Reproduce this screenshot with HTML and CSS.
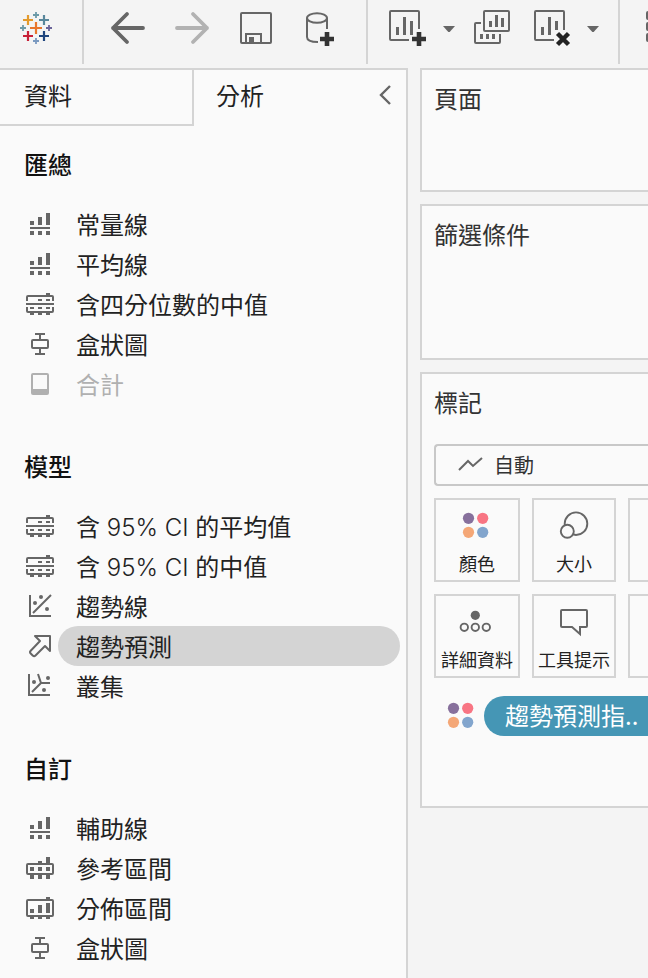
FILE: index.html
```html
<!DOCTYPE html>
<html lang="zh-Hant">
<head>
  <meta charset="UTF-8">
  <meta name="viewport" content="width=device-width, initial-scale=1">
  <title>分析</title>
  <link rel="stylesheet" href="styles.css">
</head>
<body>

<!-- shared icons -->
<svg class="sprite" aria-hidden="true">
  <symbol id="i-line" viewBox="0 0 32 32">
    <path fill="currentColor" d="M6 13h4v4H6zM14 9h4v8h-4zM22 5h4v12h-4zM6 19h20v2H6zM6 23h4v4H6zM14 23h4v4h-4zM22 23h4v4h-4z"/>
  </symbol>
  <symbol id="i-median" viewBox="0 0 32 32">
    <path fill="none" stroke="currentColor" stroke-width="2" d="M3 13V9a1 1 0 0 1 1-1H28a1 1 0 0 1 1 1V13M2 16H30M3 19V23a1 1 0 0 0 1 1H28a1 1 0 0 0 1-1V19"/>
    <path fill="currentColor" d="M22 5h4v2h-4zM14 11h4v2h-4zM22 11h4v2h-4zM6 19h4v2H6zM14 19h4v2h-4zM22 19h4v2h-4zM6 25h4v2H6zM14 25h4v2h-4zM22 25h4v2h-4z"/>
  </symbol>
  <symbol id="i-box" viewBox="0 0 32 32">
    <path fill="none" stroke="currentColor" stroke-width="2" d="M11 6H21M16 6V12M16 20V26M11 26H21"/>
    <rect x="8" y="12" width="16" height="8" rx="1" fill="none" stroke="currentColor" stroke-width="2"/>
  </symbol>
  <symbol id="i-dots" viewBox="0 0 32 32">
    <circle cx="7.5" cy="8.3" r="5.6" fill="#87709c"/>
    <circle cx="21.7" cy="8.3" r="5.6" fill="#f87583"/>
    <circle cx="7.5" cy="22.3" r="5.6" fill="#f4a777"/>
    <circle cx="21.7" cy="22.3" r="5.6" fill="#82a5cd"/>
  </symbol>
</svg>

<header class="toolbar">
  <div class="logo">
    <svg width="40" height="40" viewBox="0 0 40 40" fill="none">
      <path stroke="#e8762c" stroke-width="2.2" d="M20 14V26M14 20H26"/>
      <path stroke="#e39a2d" stroke-width="2.2" d="M12 7V17M7 12H17"/>
      <path stroke="#59879b" stroke-width="2.2" d="M28 7V17M23 12H33"/>
      <path stroke="#c72037" stroke-width="2.2" d="M12 23V33M7 28H17"/>
      <path stroke="#1f457e" stroke-width="2.2" d="M28 23V33M23 28H33"/>
      <path stroke="#6c9aa8" stroke-width="1.8" d="M20 4V10M17 7H23M7 17V23M4 20H10"/>
      <path stroke="#7a99c0" stroke-width="1.8" d="M20 30V36M17 33H23"/>
      <path stroke="#6a6499" stroke-width="1.8" d="M33 17V23M30 20H36"/>
    </svg>
  </div>
  <div class="tools nav">
    <button class="tool" aria-label="上一步">
      <svg width="40" height="40" viewBox="0 0 40 40" fill="none" stroke="#666" stroke-width="3.8" stroke-linecap="round" stroke-linejoin="round"><path d="M35 20H5M19 6L5 20L19 34"/></svg>
    </button>
    <button class="tool" aria-label="下一步">
      <svg width="40" height="40" viewBox="0 0 40 40" fill="none" stroke="#b2b2b2" stroke-width="3.8" stroke-linecap="round" stroke-linejoin="round"><path d="M5 20H35M21 6L35 20L21 34"/></svg>
    </button>
    <button class="tool" aria-label="儲存">
      <svg width="40" height="40" viewBox="0 0 40 40" fill="none" stroke="#666" stroke-width="2"><rect x="5" y="5" width="30" height="30" rx="1"/><path d="M10 35V26H25V35"/><path d="M13 29h5v5h-5z" fill="#666" stroke="none"/></svg>
    </button>
    <button class="tool" aria-label="新增資料來源">
      <svg width="40" height="40" viewBox="0 0 40 40" fill="none" stroke="#666" stroke-width="2"><ellipse cx="17" cy="10" rx="10" ry="4.8"/><path d="M7 10V29C7 32 11 34 18 34M27 10V21"/><path d="M27 24V38M20 31H34" stroke="#333" stroke-width="4.6"/></svg>
    </button>
  </div>
  <div class="tools sheets">
    <button class="tool" aria-label="新增工作表">
      <svg width="40" height="40" viewBox="0 0 40 40"><path fill="none" stroke="#666" stroke-width="2" d="M21 32H3a1 1 0 0 1-1-1V4a1 1 0 0 1 1-1H30a1 1 0 0 1 1 1V21"/><path fill="#666" d="M8 19h3v8H8zM15 9h3v18h-3zM22 13h3v14h-3z"/><path stroke="#333" stroke-width="4.6" d="M31 24V38M24 31H38"/></svg>
    </button>
    <button class="caret" aria-label="新增選項">
      <svg width="12" height="10" viewBox="0 0 12 10"><path fill="#666" d="M0 3H12L6.700 9H5.300Z"/></svg>
    </button>
    <button class="tool duplicate" aria-label="複製">
      <svg width="40" height="40" viewBox="0 0 40 40"><g fill="none" stroke="#666" stroke-width="2"><rect x="12" y="3" width="25" height="20" rx="1"/><path d="M9 15H4a1 1 0 0 0-1 1V34a1 1 0 0 0 1 1H27a1 1 0 0 0 1-1V26"/></g><path fill="#666" d="M17 13h3v6h-3zM23 7h3v12h-3zM29 10h3v9h-3zM8 26h3v5H8zM14 26h3v5h-3zM20 26h3v5h-3z"/></svg>
    </button>
    <button class="tool" aria-label="清除工作表">
      <svg width="40" height="40" viewBox="0 0 40 40"><path fill="none" stroke="#666" stroke-width="2" d="M22 32H4a1 1 0 0 1-1-1V4a1 1 0 0 1 1-1H31a1 1 0 0 1 1 1V22"/><path fill="#666" d="M9 19h3v8H9zM16 9h3v18h-3zM23 13h3v9h-3z"/><path stroke="#222" stroke-width="4.4" d="M25.500 25.500L36.500 36.500M36.500 25.500L25.500 36.500"/></svg>
    </button>
    <button class="caret" aria-label="清除選項">
      <svg width="12" height="10" viewBox="0 0 12 10"><path fill="#666" d="M0 3H12L6.700 9H5.300Z"/></svg>
    </button>
  </div>
  <div class="tools more">
    <button class="tool" aria-label="交換">
      <svg width="40" height="40" viewBox="0 0 40 40" fill="none" stroke="#666" stroke-width="2"><rect x="3" y="4" width="8" height="7" rx="1"/><rect x="3" y="15" width="8" height="7" rx="1"/><rect x="3" y="26" width="8" height="7" rx="1"/></svg>
    </button>
  </div>
</header>

<main class="workspace">
  <aside class="side">
    <div class="tabs">
      <button class="tab">資料</button>
      <button class="tab active">分析</button>
      <button class="collapse" aria-label="收合">
        <svg width="12" height="20" viewBox="0 0 12 20" fill="none" stroke="#666" stroke-width="2.4"><path d="M11 1L2 10L11 19"/></svg>
      </button>
    </div>

    <section class="group">
      <h2>匯總</h2>
      <button class="item"><svg class="icon"><use href="#i-line"/></svg><span>常量線</span></button>
      <button class="item"><svg class="icon"><use href="#i-line"/></svg><span>平均線</span></button>
      <button class="item"><svg class="icon"><use href="#i-median"/></svg><span>含四分位數的中值</span></button>
      <button class="item"><svg class="icon"><use href="#i-box"/></svg><span>盒狀圖</span></button>
      <button class="item" disabled>
        <svg class="icon" viewBox="0 0 32 32"><rect x="8" y="6" width="16" height="20" rx="1" fill="none" stroke="currentColor" stroke-width="2"/><path fill="currentColor" d="M8 21h16v5H8z"/></svg>
        <span>合計</span>
      </button>
    </section>

    <section class="group">
      <h2>模型</h2>
      <button class="item"><svg class="icon"><use href="#i-median"/></svg><span>含<b class="latin"> 95% CI </b>的平均值</span></button>
      <button class="item"><svg class="icon"><use href="#i-median"/></svg><span>含<b class="latin"> 95% CI </b>的中值</span></button>
      <button class="item">
        <svg class="icon" viewBox="0 0 32 32"><path fill="none" stroke="currentColor" stroke-width="2" d="M6 5V26H27M9 23L27 5"/><g fill="currentColor"><circle cx="11" cy="13" r="2"/><circle cx="17" cy="7" r="2"/><circle cx="23" cy="19" r="2"/></g></svg>
        <span>趨勢線</span>
      </button>
      <button class="item selected">
        <svg class="icon" viewBox="0 0 32 32"><path fill="none" stroke="currentColor" stroke-width="2" stroke-linejoin="round" d="M11 6H26V21L21 16L11.500 25.500a2 2 0 0 1-2.800 0L6.700 23.500a2 2 0 0 1 0-2.800L16 11Z"/></svg>
        <span>趨勢預測</span>
      </button>
      <button class="item">
        <svg class="icon" viewBox="0 0 32 32"><path fill="none" stroke="currentColor" stroke-width="2" d="M5 4V25H26M14 4L17 13H26M17 13L8 22"/><g fill="currentColor"><circle cx="10" cy="12" r="2"/><circle cx="24" cy="8" r="2"/><circle cx="20" cy="20" r="2"/></g></svg>
        <span>叢集</span>
      </button>
    </section>

    <section class="group">
      <h2>自訂</h2>
      <button class="item"><svg class="icon"><use href="#i-line"/></svg><span>輔助線</span></button>
      <button class="item">
        <svg class="icon" viewBox="0 0 32 32"><rect x="3" y="12" width="26" height="10" rx="1" fill="none" stroke="currentColor" stroke-width="2"/><path fill="currentColor" d="M22 5h4v6h-4zM14 9h4v2h-4zM6 15h4v4H6zM14 15h4v4h-4zM22 15h4v4h-4zM6 23h4v4H6zM14 23h4v4h-4zM22 23h4v4h-4z"/></svg>
        <span>參考區間</span>
      </button>
      <button class="item">
        <svg class="icon" viewBox="0 0 32 32"><rect x="3" y="8" width="26" height="16" rx="1" fill="none" stroke="currentColor" stroke-width="2"/><path fill="currentColor" d="M22 5h4v2h-4zM6 17h4v4H6zM14 13h4v8h-4zM22 11h4v10h-4zM6 25h4v2H6zM14 25h4v2h-4zM22 25h4v2h-4z"/></svg>
        <span>分佈區間</span>
      </button>
      <button class="item"><svg class="icon"><use href="#i-box"/></svg><span>盒狀圖</span></button>
    </section>
  </aside>

  <div class="shelves">
    <section class="card pages">
      <h3>頁面</h3>
    </section>
    <section class="card filters">
      <h3>篩選條件</h3>
    </section>
    <section class="card marks">
      <h3 id="marks-title">標記</h3>
      <div class="mark-type">
        <svg class="mark-icon" width="26" height="16" viewBox="0 0 26 16" fill="none" stroke="#666" stroke-width="2"><path d="M1 14L10 5L15 10L24 2"/></svg>
        <select aria-labelledby="marks-title">
          <option>自動</option>
        </select>
      </div>
      <div class="tiles">
        <button class="tile"><svg class="icon"><use href="#i-dots"/></svg><span>顏色</span></button>
        <button class="tile">
          <svg class="icon" viewBox="0 0 32 32" fill="none" stroke="#666" stroke-width="1.900"><circle cx="18" cy="13.700" r="11.300"/><circle cx="9.300" cy="21.300" r="6.500" fill="#fafafa"/></svg>
          <span>大小</span>
        </button>
        <button class="tile" aria-label="標籤"></button>
        <button class="tile">
          <svg class="icon" viewBox="0 0 32 32" fill="none" stroke="#666" stroke-width="1.900"><circle cx="14.300" cy="9.300" r="4.600" fill="#666" stroke="none"/><circle cx="3.300" cy="21.300" r="3.700"/><circle cx="14.300" cy="21.300" r="3.700"/><circle cx="25.300" cy="21.300" r="3.700"/></svg>
          <span>詳細資料</span>
        </button>
        <button class="tile">
          <svg class="icon" viewBox="0 0 32 32" fill="none" stroke="#666" stroke-width="2"><path d="M4 4H28a1 1 0 0 1 1 1V20a1 1 0 0 1-1 1H22V28L14 21H4a1 1 0 0 1-1-1V5a1 1 0 0 1 1-1Z"/></svg>
          <span>工具提示</span>
        </button>
        <button class="tile" aria-label="路徑"></button>
      </div>
      <div class="pill-row">
        <svg class="icon"><use href="#i-dots"/></svg>
        <button class="pill">趨勢預測指..</button>
      </div>
    </section>
  </div>
</main>

</body>
</html>
```
FILE: styles.css
```css
* { box-sizing: border-box; }
body {
  margin: 0;
  min-height: 100vh;
  display: flex;
  flex-direction: column;
  background: #f4f4f4;
  color: #222;
  font-family: "Noto Sans CJK TC", sans-serif;
  font-size: 24px;
  overflow-x: hidden;
}
button {
  margin: 0;
  padding: 0;
  border: none;
  background: none;
  color: inherit;
  font: inherit;
  cursor: pointer;
}
h2, h3 { margin: 0; font-size: 24px; }
svg { display: block; flex: none; }
.sprite { position: absolute; width: 0; height: 0; }
.icon { width: 32px; height: 32px; overflow: visible; }

/* toolbar */
.toolbar { display: flex; height: 68px; padding-bottom: 4px; overflow: hidden; }
.logo { display: flex; align-items: center; padding: 0 26px 8px 16px; }
.tools { display: flex; flex: none; border-left: 2px solid #d4d4d4; }
.tool, .caret { display: flex; align-items: center; justify-content: center; height: 56px; }
.tool { width: 40px; }
.caret { width: 42px; }
.nav { padding: 0 14px 0 12px; }
.nav .tool { width: 64px; }
.sheets { padding: 0 4px 0 20px; }
.sheets .duplicate { width: 44px; margin-right: 18px; }
.more { padding-left: 24px; }

.workspace { flex: 1; display: flex; gap: 12px; }

/* analytics pane */
.side {
  flex: none;
  width: 408px;
  background: #fafafa;
  border-top: 2px solid #d4d4d4;
  border-right: 2px solid #d4d4d4;
}
.tabs { display: flex; height: 56px; margin-bottom: 18px; }
.tab { padding: 0 22px 6px; text-align: left; }
.tab.active { padding-bottom: 8px; }
.tab:first-child { width: 194px; padding-left: 24px; border-right: 2px solid #d4d4d4; border-bottom: 2px solid #d4d4d4; }
.collapse { margin-left: auto; padding: 0 15px 6px; }
.group { padding-right: 6px; margin-bottom: 42px; }
.group:last-child { margin-bottom: 0; }
.group h2 {
  padding-left: 24px;
  margin-bottom: 20px;
  line-height: 40px;
  font-weight: 500;
  color: #111;
}
.item { display: flex; align-items: center; width: 100%; padding-left: 24px; text-align: left; }
.item .icon { color: #666; }
.item span { flex: 1; margin-left: 2px; padding: 0 18px; line-height: 40px; border-radius: 20px; }
.item .latin { font-family: Inter, sans-serif; font-weight: 300; line-height: 24px; }
.item.selected span { background: #d4d4d4; }
.item:disabled, .item:disabled .icon { color: #b0b0b0; cursor: default; }

/* shelves */
.shelves { flex: 1; min-width: 0; display: flex; flex-direction: column; gap: 12px; }
.card {
  padding: 12px 0 12px 12px;
  background: #fafafa;
  border: 2px solid #d4d4d4;
  border-right: none;
  overflow: hidden;
}
.card h3 { line-height: 32px; font-weight: 400; color: #333; }
.pages { min-height: 124px; }
.filters { min-height: 156px; }
.marks { min-height: 436px; }

.mark-type { position: relative; margin: 26px 0 12px; }
.mark-icon { position: absolute; left: 24px; top: 12px; pointer-events: none; }
.mark-type select {
  display: block;
  width: 100%;
  height: 42px;
  padding: 0 0 2px 58px;
  appearance: none;
  background: #fafafa;
  border: 2px solid #c8c8c8;
  border-right: none;
  border-radius: 4px 0 0 4px;
  color: #333;
  font-family: inherit;
  font-size: 20px;
}
.tiles { display: grid; grid-template-columns: 86px 84px 84px; grid-auto-rows: 84px; gap: 12px; }
.tile {
  display: flex;
  flex-direction: column;
  align-items: center;
  gap: 10px;
  padding-top: 10px;
  border: 2px solid #d4d4d4;
  font-size: 18px;
  line-height: 22px;
}
.tile span { white-space: nowrap; }
.pill-row { display: flex; align-items: center; gap: 6px; margin-top: 18px; padding-left: 12px; }
.pill {
  flex: 1;
  padding: 0 0 2px 21px;
  border-radius: 20px 0 0 20px;
  background: #4596b5;
  color: #fff;
  line-height: 38px;
  text-align: left;
  white-space: nowrap;
}
```
